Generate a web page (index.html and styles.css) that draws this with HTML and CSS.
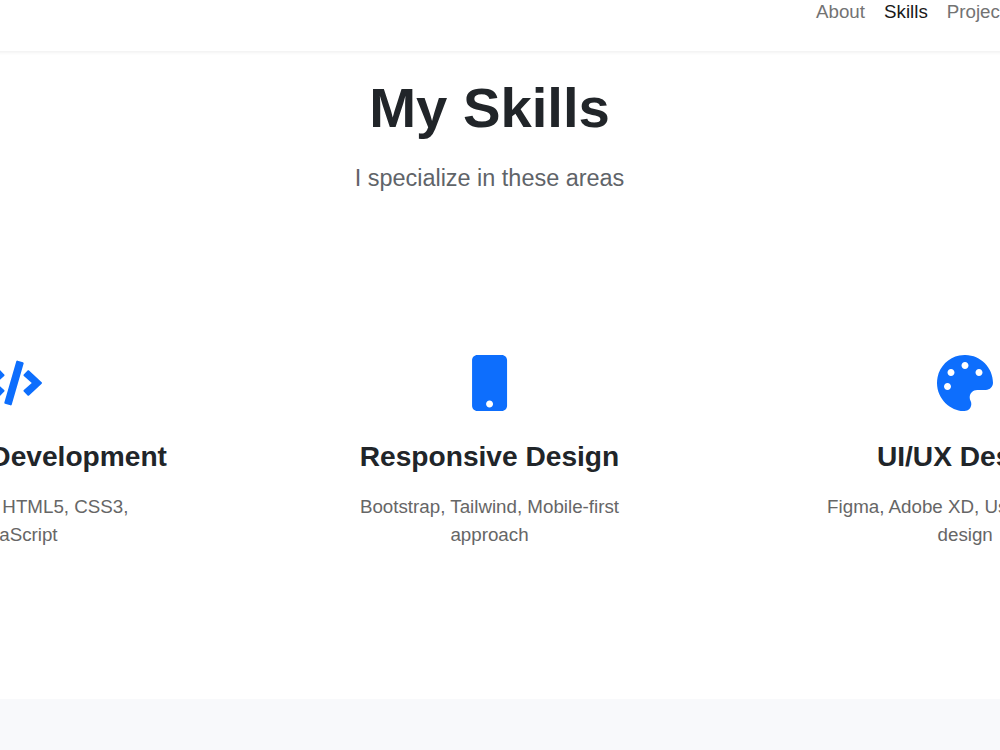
FILE: index.html
```
<!DOCTYPE html>
<html lang="en">
<head>
    <meta charset="UTF-8">
    <title>My Portfolio</title>
    <link rel="stylesheet" href="styles.css">
</head>
<body>
    <nav class="navbar">
        <a class="nav-link" href="#about">About</a>
        <a class="nav-link active" href="#skills">Skills</a>
        <a class="nav-link" href="#projects">Projects</a>
    </nav>

    <section class="skills" id="skills">
        <div class="section-title">
            <h2>My Skills</h2>
            <p>I specialize in these areas</p>
        </div>
        <div class="skills-row">
            <div class="skill-card">
                <svg class="skill-icon" viewBox="0 -64 640 640">
                    <path d="M278.9 511.5l-61-17.7c-6.4-1.8-10-8.5-8.2-14.9L346.2 8.7c1.8-6.4 8.5-10 14.9-8.2l61 17.7c6.4 1.8 10 8.5 8.2 14.9L293.8 503.3c-1.9 6.4-8.5 10.1-14.9 8.2zm-114-112.2l43.5-46.4c4.6-4.9 4.3-12.7-.8-17.2L117 256l90.6-79.7c5.1-4.5 5.5-12.3.8-17.2l-43.5-46.4c-4.5-4.8-12.1-5.1-17-.5L3.8 247.2c-5.1 4.7-5.1 12.8 0 17.5l144.1 135.1c4.9 4.6 12.5 4.4 17-.5zm327.2.6l144.1-135.1c5.1-4.7 5.1-12.8 0-17.5L492.1 112.1c-4.8-4.5-12.4-4.3-17 .5L431.6 159c-4.6 4.9-4.3 12.7.8 17.2L523 256l-90.6 79.7c-5.1 4.5-5.5 12.3-.8 17.2l43.5 46.4c4.5 4.9 12.1 5.1 17 .6z"/>
                </svg>
                <h3>Frontend Development</h3>
                <p>Responsive HTML5, CSS3,<br>JavaScript</p>
            </div>
            <div class="skill-card">
                <svg class="skill-icon" viewBox="-92 0 512 512">
                    <path d="M272 0H48C21.5 0 0 21.5 0 48v416c0 26.5 21.5 48 48 48h224c26.5 0 48-21.5 48-48V48c0-26.5-21.5-48-48-48zM160 480c-17.7 0-32-14.3-32-32s14.3-32 32-32 32 14.3 32 32-14.3 32-32 32z"/>
                </svg>
                <h3>Responsive Design</h3>
                <p>Bootstrap, Tailwind, Mobile-first<br>approach</p>
            </div>
            <div class="skill-card">
                <svg class="skill-icon" viewBox="0 0 512 512">
                    <path d="M204.3 5C104.9 24.4 24.8 104.3 5.2 203.4c-37 187 131.7 326.4 258.8 306.7 41.2-6.4 61.4-54.6 42.5-91.7-23.1-45.4 9.9-98.4 60.9-98.4h79.7c35.8 0 64.8-29.6 64.9-65.3C511.5 97.1 368.1-26.9 204.3 5zM96 320c-17.7 0-32-14.3-32-32s14.3-32 32-32 32 14.3 32 32-14.3 32-32 32zm32-128c-17.7 0-32-14.3-32-32s14.3-32 32-32 32 14.3 32 32-14.3 32-32 32zm128-64c-17.7 0-32-14.3-32-32s14.3-32 32-32 32 14.3 32 32-14.3 32-32 32zm128 64c-17.7 0-32-14.3-32-32s14.3-32 32-32 32 14.3 32 32-14.3 32-32 32z"/>
                </svg>
                <h3>UI/UX Design</h3>
                <p>Figma, Adobe XD, User-centered<br>design</p>
            </div>
        </div>
    </section>

    <section class="projects" id="projects"></section>
</body>
</html>
```
FILE: styles.css
```
* {
    box-sizing: border-box;
}
body {
    margin: 0;
    background: #fff;
    color: #212529;
    font-family: "Liberation Sans", Arial, sans-serif;
    font-size: 18.75px;
    line-height: 28px;
    overflow: hidden;
}
h2, h3, p {
    margin: 0;
}
.navbar {
    display: flex;
    gap: 19px;
    width: 1172px;
    height: 51px;
    margin-left: -20px;
    padding-left: 836px;
    box-shadow: 0 1px 4px rgba(0, 0, 0, 0.08);
}
.nav-link {
    margin-top: -2px;
    color: #737373;
    text-decoration: none;
}
.nav-link.active {
    color: #191919;
}
.skills {
    width: 979px;
    height: 648px;
    padding-top: 22px;
}
.section-title {
    text-align: center;
}
.section-title h2 {
    font-size: 56.25px;
    line-height: 70px;
}
.section-title p {
    margin-top: 18px;
    color: #5f6469;
    font-size: 23.44px;
    line-height: 35px;
}
.skills-row {
    display: grid;
    grid-template-columns: repeat(3, 475.7px);
    justify-content: center;
    margin-top: 159px;
    text-align: center;
}
.skill-icon {
    display: block;
    width: 56px;
    height: 56px;
    margin: 0 auto;
    fill: #0d6efd;
}
.skill-card h3 {
    margin-top: 28px;
    font-size: 28.13px;
    line-height: 35px;
}
.skill-card p {
    margin-top: 19px;
    color: #666;
}
.projects {
    height: 51px;
    background: #f8f9fb;
}
```
